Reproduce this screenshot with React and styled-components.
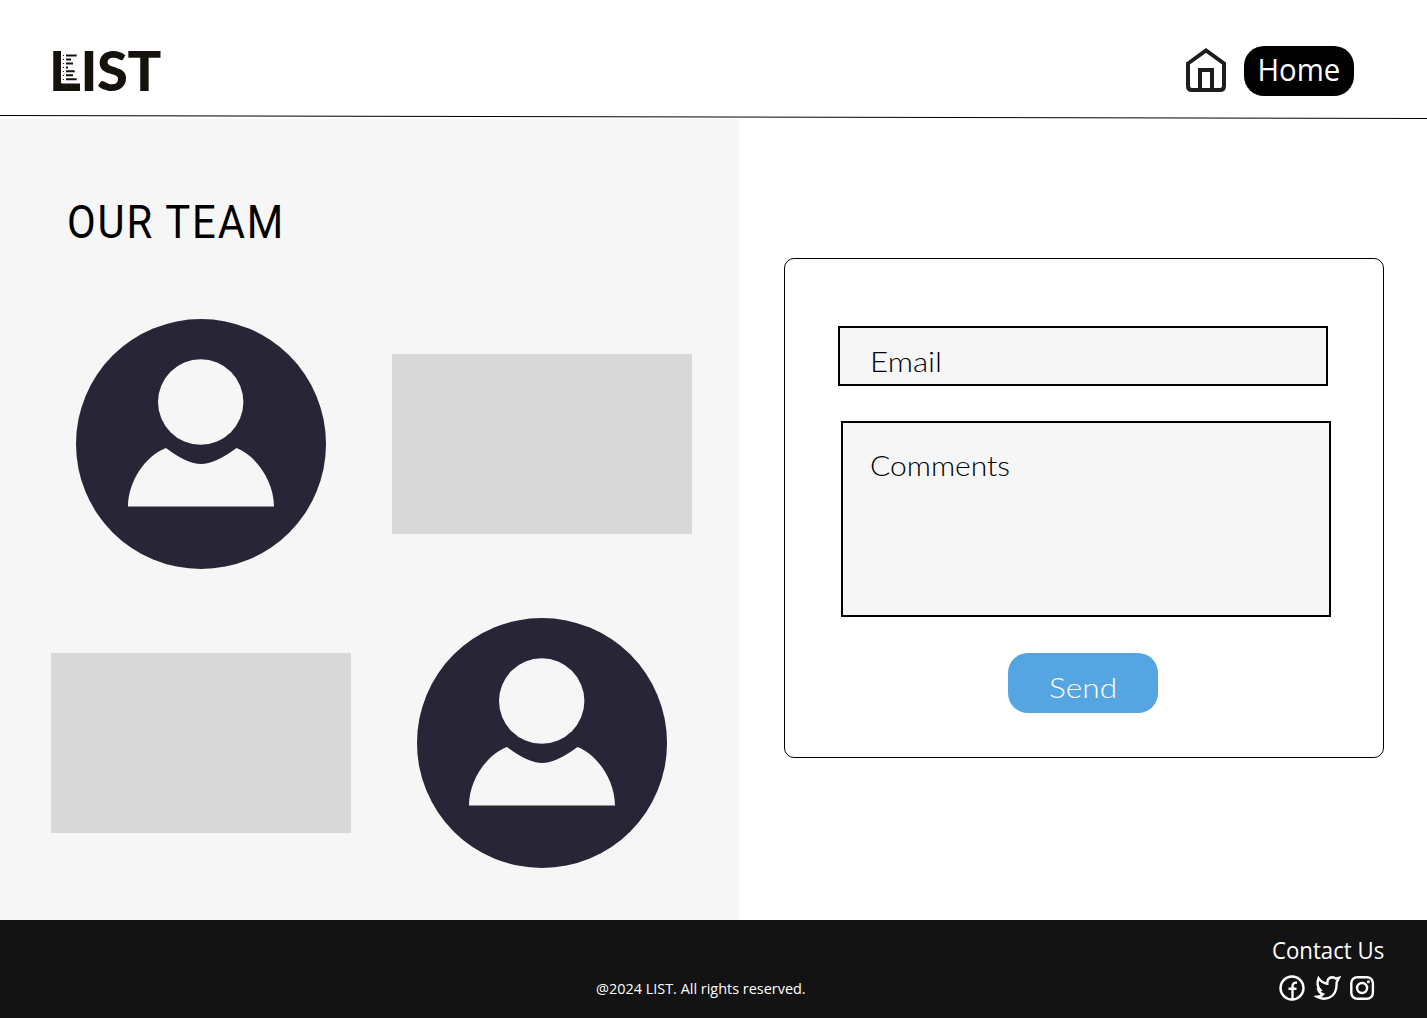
import React from 'react';
import styled, { createGlobalStyle } from 'styled-components';

const GlobalStyle = createGlobalStyle`
  *, *::before, *::after { box-sizing: border-box; }
  body { margin: 0; background: #fff; color: #000; font-family: "Open Sans", sans-serif; }
`;

const Page = styled.div`
  display: flex;
  flex-direction: column;
  width: 1427px;
  height: 1018px;
  overflow: hidden;
`;

const Label = styled.span`
  display: inline-block;
  flex: none;
  font-family: ${(p) => p.$font || '"Open Sans"'}, sans-serif;
  font-size: ${(p) => p.$size}px;
  font-weight: ${(p) => p.$weight || 400};
  line-height: ${(p) => p.$line}px;
  letter-spacing: ${(p) => p.$track || 0}px;
  white-space: nowrap;
  transform: scaleX(${(p) => p.$stretch || 1});
  transform-origin: ${(p) => p.$origin || 'left'} center;
`;

const Header = styled.header`
  display: flex;
  justify-content: space-between;
  height: 115px;
  padding: 45px 73px 0 49px;
`;

const Logo = styled.div`
  position: relative;
  height: 50px;
  color: #15120c;
`;

const Initial = styled.span`
  letter-spacing: 2.2px;
`;

const LogoBars = styled.svg`
  position: absolute;
  left: 12px;
  top: 5px;
`;

const Nav = styled.nav`
  display: flex;
  gap: 16px;
  padding-top: 1px;
`;

const HomeButton = styled.a`
  display: flex;
  justify-content: center;
  width: 110px;
  height: 50px;
  border-radius: 20px;
  background: #000;
  color: #fff;
`;

const Rule = styled.svg`
  display: block;
  flex: none;
`;

const Main = styled.main`
  display: flex;
  height: 801px;
`;

const Team = styled.section`
  width: 739px;
  padding: 73px 0 0 51px;
  background: #f6f6f6;
`;

const Title = styled.h1`
  margin: 0 0 67px 16px;
  height: 60px;
`;

const Member = styled.div`
  display: flex;
  align-items: center;
  gap: 66px;
  height: 250px;
  margin-bottom: 49px;
  padding-left: ${(p) => p.$indent || 0}px;
`;

const Bio = styled.div`
  width: 300px;
  height: 180px;
  background: #d9d9d9;
`;

const Contact = styled.section`
  padding: 139px 0 0 45px;
`;

const Form = styled.form`
  display: flex;
  flex-direction: column;
  width: 600px;
  height: 500px;
  padding: 67px 0 0 53px;
  border: 1px solid #000;
  border-radius: 10px;
`;

const Field = styled.div`
  width: 490px;
  height: ${(p) => p.$height}px;
  margin: ${(p) => p.$margin};
  padding: ${(p) => p.$pad};
  border: 2px solid #000;
  background: #f6f6f6;
`;

const Send = styled.button`
  display: flex;
  justify-content: center;
  width: 150px;
  height: 60px;
  margin: 36px 0 0 170px;
  padding: 14px 0 0;
  border: 0;
  border-radius: 20px;
  background: #54a5e2;
  color: #fff;
`;

const Footer = styled.footer`
  display: grid;
  grid-template-columns: 596px 1fr 155px;
  height: 98px;
  background: #131313;
  color: #fff;
`;

const Copyright = styled.p`
  grid-column: 2;
  margin: 0;
  padding-top: 57px;
`;

const Follow = styled.div`
  display: flex;
  flex-direction: column;
  align-items: flex-start;
  padding-top: 15px;
`;

const Socials = styled.div`
  display: flex;
  align-items: center;
  gap: 9px;
  margin: 9px 0 0 6px;
`;

const Avatar = () => (
  <svg width="250" height="250" viewBox="0 0 250 250">
    <circle cx="125" cy="125" r="125" fill="#282636" />
    <circle cx="124.7" cy="83" r="42.7" fill="#f6f6f6" />
    <path d="M90 129C69 137 52 163 52 187.5H198C198 163 181 137 160.500 129Q139 145 125 145Q111 145 90 129Z" fill="#f6f6f6" />
  </svg>
);

const HomeIcon = () => (
  <svg width="44" height="50" viewBox="0 0 44 50" fill="none" stroke="#1d1d1d" strokeWidth="4">
    <path d="M4 17.500L22 4.500L40 17.500V40Q40 44 36 44H8Q4 44 4 40ZM16 44V24H28V44" />
  </svg>
);

const Icon = ({ children }) => (
  <svg width="27" height="28" viewBox="0 0 27 28" fill="none" stroke="#fff" strokeWidth="2.400">{children}</svg>
);

export default function App() {
  return (
    <Page>
      <GlobalStyle />
      <Header>
        <Logo>
          <Label $font="Lato" $size={56} $weight={900} $line={50} $track={-0.4}><Initial>L</Initial>IST</Label>
          <LogoBars width="20" height="42" viewBox="0 0 20 42">
            <rect width="6" height="33" fill="#fff" />
            <path d="M2.500 5V31" stroke="#15120c" strokeWidth="1" strokeDasharray="1 3" />
            <path d="M5 5.500H15.700M5 9.500H10M5 13.500H12M5 17.500H7M5 21.300H13.700M5 25.200H12M5 29.200H15.700" stroke="#15120c" strokeWidth="2" />
            <rect y="33.500" width="19" height="7.500" fill="#15120c" />
          </LogoBars>
        </Logo>
        <Nav>
          <HomeIcon />
          <HomeButton><Label $size={31} $line={46} $stretch={0.945} $origin="center">Home</Label></HomeButton>
        </Nav>
      </Header>
      <Rule width="1427" height="4" viewBox="0 0 1427 4">
        <path d="M0 0.500L1427 3.500" stroke="#000" />
      </Rule>
      <Main>
        <Team>
          <Title><Label $font="Roboto" $size={46} $line={60} $track={2} $stretch={0.908}>OUR TEAM</Label></Title>
          <Member $indent={25}><Avatar /><Bio /></Member>
          <Member><Bio /><Avatar /></Member>
        </Team>
        <Contact>
          <Form>
            <Field $height={60} $margin="0" $pad="13px 0 0 30px"><Label $font="Lato" $weight={300} $size={28} $line={40} $stretch={1.12}>Email</Label></Field>
            <Field $height={196} $margin="35px 0 0 3px" $pad="22px 0 0 27px"><Label $font="Lato" $weight={300} $size={28} $line={40} $stretch={1.072}>Comments</Label></Field>
            <Send type="button"><Label $font="Lato" $weight={300} $size={28} $line={40} $stretch={1.13} $origin="center">Send</Label></Send>
          </Form>
        </Contact>
      </Main>
      <Footer>
        <Copyright><Label $size={15} $line={22} $stretch={0.962}>@2024 LIST. All rights reserved.</Label></Copyright>
        <Follow>
          <Label $size={23} $line={30} $stretch={0.965}>Contact Us</Label>
          <Socials>
            <Icon>
              <circle cx="14" cy="14" r="11.500" />
              <path d="M14.500 25V13Q14.500 8 19 8.700M10.500 14.800H18.500" />
            </Icon>
            <Icon>
              <path d="M4.500 4.300Q8 9 13.300 9.700Q13 3.500 18.300 3.200Q20.300 3.200 21.800 4.700L25 3.800L22.600 8.500Q23 20 15.500 23.500Q9 26.300 3 22.800Q7 22.700 9 20.300Q5.500 19 4.500 16Q5.200 16.300 6.400 16Q4 13.500 3.700 11Q3.300 7.500 4.500 4.300Z" />
            </Icon>
            <Icon>
              <rect x="1.300" y="3.200" width="21.600" height="21.600" rx="6" />
              <circle cx="12.100" cy="14" r="5" />
              <circle cx="18.400" cy="7.700" r="1.500" fill="#fff" stroke="none" />
            </Icon>
          </Socials>
        </Follow>
      </Footer>
    </Page>
  );
}
